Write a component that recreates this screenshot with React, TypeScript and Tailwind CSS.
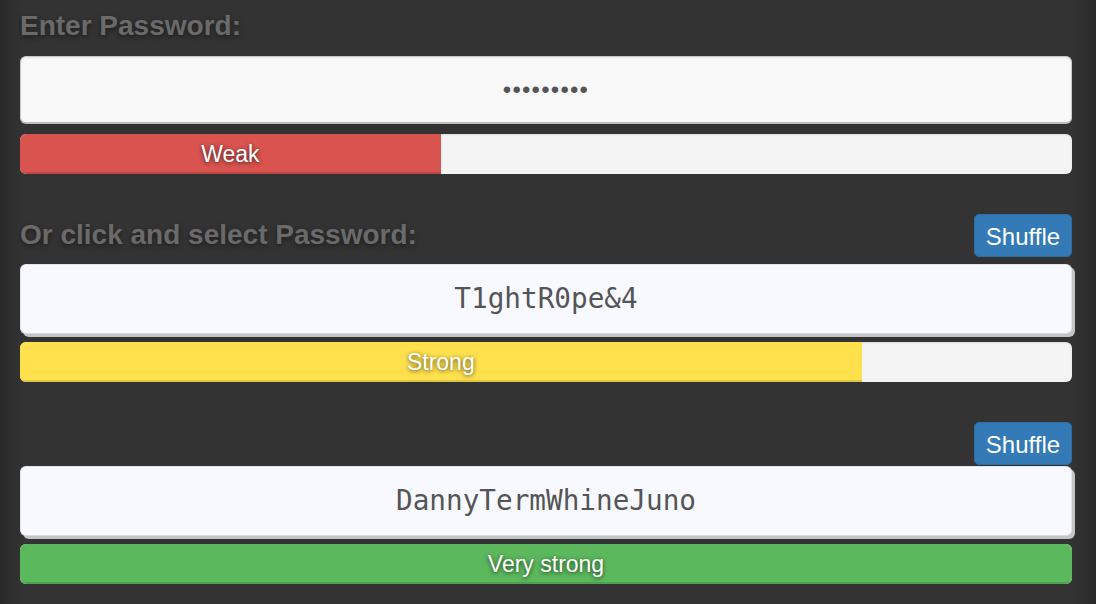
import React from "react";

const sans = { fontFamily: '"Liberation Sans", Arial, Helvetica, sans-serif' };

function Bar({ pct, color, label }: { pct: number; color: string; label: string }) {
  return (
    <div className="h-[40px] w-full overflow-hidden rounded-[6px] bg-[#f4f4f4] shadow-[inset_0_1px_2px_rgba(0,0,0,0.1)]">
      <div
        className={`flex h-full items-center justify-center text-[23px] text-white shadow-[inset_0_-2px_0_rgba(0,0,0,0.12)] [text-shadow:0_1px_4px_rgba(0,0,0,0.7)] ${color}`}
        style={{ width: `${pct}%` }}
      >
        {label}
      </div>
    </div>
  );
}

function ShuffleBtn() {
  return (
    <button className="flex h-[43px] w-[98px] items-center justify-center rounded-[5px] border border-[#2e6da4] bg-[#337ab7] pt-[2px] text-[24px] leading-none text-white">
      Shuffle
    </button>
  );
}

function Box({ text }: { text: string }) {
  return (
    <div
      className="flex h-[70px] w-full items-center justify-center rounded-[6px] border border-[#e4e4ee] border-b-[#d8d8e2] bg-[#f8f9ff] text-[27.7px] text-[#555] shadow-[3px_3px_0_#c4c4c4]"
      style={{ fontFamily: '"DejaVu Sans Mono", monospace' }}
    >
      {text}
    </div>
  );
}

export default function App() {
  return (
    <div
      className="h-[604px] w-full bg-[linear-gradient(to_right,#2a2a2a_0px,#333333_24px,#333333_calc(100%_-_24px),#2a2a2a_100%)] pl-[20px] pr-[24px]"
      style={sans}
    >
      <div className="h-[56px] pt-[6px] text-[28px] font-bold leading-[40px] text-[#6a6a6a] [text-shadow:0_2px_5px_rgba(0,0,0,0.45)]">
        Enter Password:
      </div>
      <div className="flex h-[68px] w-full items-center justify-center rounded-[6px] border border-[#c8c8c8] border-b-2 border-b-[#bdbdbd] bg-[#f9f9f9] text-[24px] tracking-[1.2px] text-[#555] shadow-[inset_0_1px_2px_rgba(0,0,0,0.08)]">
        •••••••••
      </div>
      <div className="mt-[10px]">
        <Bar pct={40} color="bg-[#d9534f]" label="Weak" />
      </div>

      <div className="mt-[40px] flex h-[43px] items-center justify-between">
        <div className="-mt-[1px] text-[28px] font-bold leading-[40px] text-[#6a6a6a] [text-shadow:0_2px_5px_rgba(0,0,0,0.45)]">
          Or click and select Password:
        </div>
        <ShuffleBtn />
      </div>
      <div className="mt-[7px]">
        <Box text="T1ghtR0pe&4" />
      </div>
      <div className="mt-[8px]">
        <Bar pct={80} color="bg-[#ffe04d]" label="Strong" />
      </div>

      <div className="mt-[40px] flex h-[43px] items-center justify-end">
        <ShuffleBtn />
      </div>
      <div className="mt-[1px]">
        <Box text="DannyTermWhineJuno" />
      </div>
      <div className="mt-[8px]">
        <Bar pct={100} color="bg-[#5cb85c]" label="Very strong" />
      </div>
    </div>
  );
}
